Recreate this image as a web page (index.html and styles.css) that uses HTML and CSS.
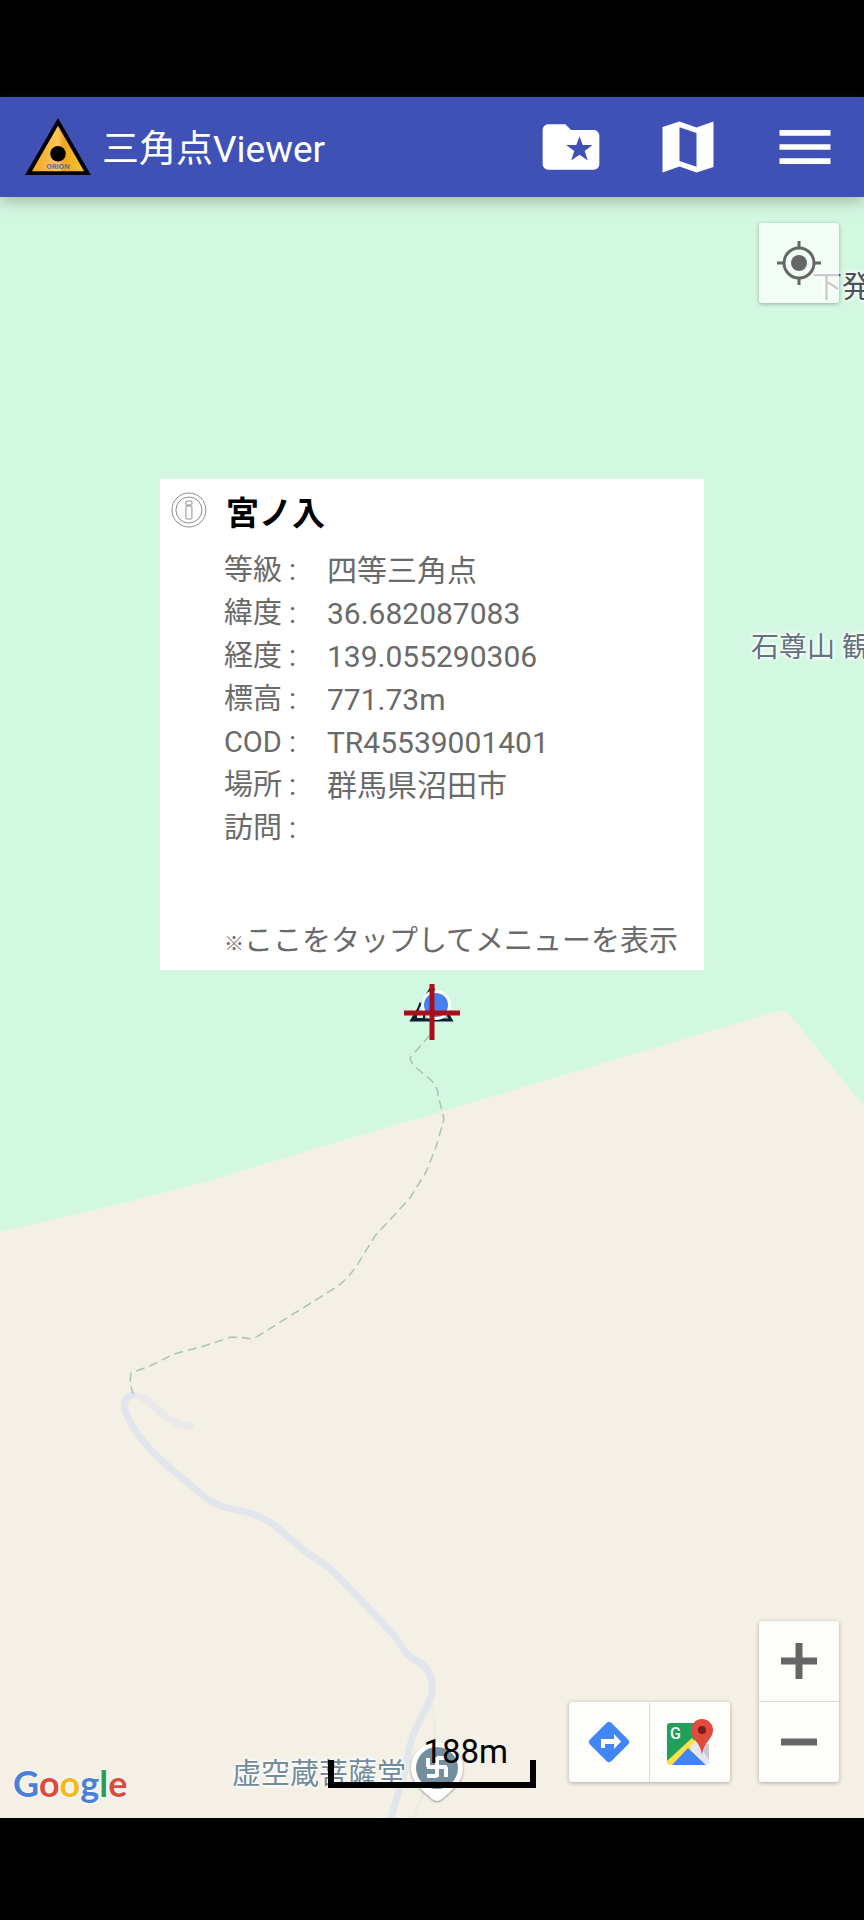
FILE: index.html
```html
<!DOCTYPE html>
<html lang="ja">

<head>
    <meta charset="UTF-8">
    <meta name="viewport" content="width=device-width, initial-scale=1.0">
    <title>三角点Viewer</title>

    <link rel="stylesheet" href="styles.css">
</head>

<body>
    <header class="header">
        <svg class="logo" viewBox="0 0 68 60">
            <defs>
                <linearGradient id="gold" x1="0" x2="1" y1="0" y2="0">
                    <stop offset="0" stop-color="#f5a81c" />
                    <stop offset="0.5" stop-color="#fbc65a" />
                    <stop offset="0.6" stop-color="#f3a51c" />
                    <stop offset="1" stop-color="#fcc62e" />
                </linearGradient>
            </defs>
            <path d="M34 0L68 59H0z" fill="#000" />
            <path d="M34 8L61 55H7z" fill="url(#gold)" />
            <circle cx="34" cy="37" r="8" fill="#000" />
            <text class="logo-text" x="34" y="53" text-anchor="middle">ORION</text>
        </svg>
        <h1 class="title">三角点Viewer</h1>
        <nav class="actions">
            <button class="action" aria-label="お気に入り">
                <svg viewBox="0 0 24 24"><path d="M20 6h-8l-2-2H4c-1.1 0-2 .9-2 2v12c0 1.1.9 2 2 2h16c1.1 0 2-.9 2-2V8c0-1.1-.9-2-2-2zm-2.06 10.8L15 14.7l-2.94 2.1 1.1-3.4-2.85-2.1h3.55L15 8.2l1.14 3.1h3.45l-2.75 2.1z" /></svg>
            </button>
            <button class="action" aria-label="地図">
                <svg viewBox="0 0 24 24"><path fill-rule="evenodd" d="M3 4.9L9 3l6 2.1L21 3v16.1L15 21l-6-2.1L3 21zM9 5v11.9l6 2.1V7.1z" /></svg>
            </button>
            <button class="action" aria-label="メニュー">
                <svg viewBox="0 0 24 24"><path d="M3 18h18v-2H3v2zm0-5h18v-2H3v2zm0-7v2h18V6H3z" /></svg>
            </button>
        </nav>
    </header>

    <main class="map">
        <!-- forest, roads and trail -->
        <svg class="terrain" viewBox="0 0 864 1621" preserveAspectRatio="xMidYMid slice">
            <path class="land" d="M0 1035L120 1007L209 984L320 950L444 914L775 815Q784 812 790 818L864 909V1621H0z" />
            <path class="road faint" d="M430 1508Q438 1525 434 1545L430 1580L413 1621" />
            <path class="road branch" d="M132 1198C147 1198 155 1212 165 1219S180 1228 190 1229" />
            <path class="road" d="M132 1198C119 1203 124 1215 135 1233C145 1248 158 1261 171 1272L206 1301C222 1313 240 1312 256 1318C275 1325 290 1343 306 1355C318 1363 328 1369 336 1377L394 1438C400 1446 403 1453 408 1458C415 1464 424 1465 429 1476C437 1492 430 1504 421 1521C411 1540 409 1551 406 1570L391 1621" />
            <path class="trail" d="M430 838L410 861L413 868L432 884Q438 891 438 898L444 922L436 950L426 975L410 1001L375 1039L362 1060Q352 1078 338 1089L298 1114L258 1139Q252 1143 246 1141L231 1140L204 1149L174 1157L150 1169L131 1176L130 1186L133 1197" />
        </svg>

        <span class="place village">下発</span>
        <span class="place mountain">石尊山 観</span>
        <span class="place temple">虚空蔵菩薩堂</span>
        <svg class="temple-pin" viewBox="0 0 56 64">
            <path d="M28 2a26 26 0 0 0-26 26c0 12 7 18 14 25l7 6q5 4 10 0l7-6c7-7 14-13 14-25A26 26 0 0 0 28 2z" fill="#fff" />
            <circle cx="28" cy="28" r="21" fill="#738f9e" />
            <path d="M28 17v20M18 27h20M19 18v9M28 18h10M37 27v10M18 36h10" stroke="#fff" stroke-width="4" fill="none" />
        </svg>

        <section class="info">
            <svg class="info-icon" viewBox="0 0 36 36">
                <circle cx="18" cy="18" r="17" />
                <circle cx="18" cy="18" r="13" />
                <rect x="15" y="9" width="6" height="4" rx="1" />
                <rect x="15" y="14" width="6" height="13" rx="1" />
            </svg>
            <h2 class="info-title">宮ノ入</h2>
            <dl class="info-list">
                <dt>等級 :</dt><dd>四等三角点</dd>
                <dt>緯度 :</dt><dd>36.682087083</dd>
                <dt>経度 :</dt><dd>139.055290306</dd>
                <dt>標高 :</dt><dd>771.73m</dd>
                <dt>COD :</dt><dd>TR45539001401</dd>
                <dt>場所 :</dt><dd>群馬県沼田市</dd>
                <dt>訪問 :</dt><dd></dd>
            </dl>
            <button class="info-note"><span class="mark">※</span>ここをタップしてメニューを表示</button>
        </section>

        <svg class="marker" viewBox="0 0 56 56">
            <path d="M28 3L47 36H8z" fill="#9fc3cc" stroke="#0c2029" stroke-width="3" />
            <path d="M12 31L16 20L20 25V35H12z" fill="#d8f0e6" stroke="#0c2029" stroke-width="2" />
            <circle cx="32" cy="21" r="15" fill="#fff" />
            <circle cx="32" cy="21" r="12" fill="#4680f0" />
            <path d="M0 29h56M28 0v56" stroke="#a90f17" stroke-width="5" />
        </svg>

        <button class="map-button locate" aria-label="現在地">
            <svg width="46" height="46" viewBox="0 0 46 46">
                <circle cx="23" cy="23" r="8" fill="#666" />
                <g fill="none" stroke="#666" stroke-width="3">
                    <circle cx="23" cy="23" r="15" />
                    <path d="M23 1v7M23 38v7M1 23h7M38 23h7" />
                </g>
            </svg>
        </button>

        <div class="controls">
            <div class="group">
                <button class="map-button" aria-label="ルート">
                    <svg width="42" height="42" viewBox="0 0 42 42">
                        <path d="M19 1.500q2-1.500 4 0L40.500 19q1.500 2 0 4L23 40.500q-2 1.500-4 0L1.500 23q-1.500-2 0-4z" fill="#4285f4" />
                        <path d="M13 27V18h13v-5l7 7.500-7 7.500v-5h-9v4z" fill="#fff" />
                    </svg>
                </button>
                <button class="map-button" aria-label="Google マップ">
                    <svg width="46" height="46" viewBox="0 0 46 46">
                        <path d="M3 4h39v39q0 3-3 3H3q-3 0-3-3V7q0-3 3-3z" fill="#f1f3f4" />
                        <path d="M3 4h26l1 16L0 43V7q0-3 3-3z" fill="#1fa15d" />
                        <path d="M25 19l6 6L7 46H3q-3 0-3-3v-1z" fill="#fde047" />
                        <path d="M21 29L39 46H5z" fill="#4285f4" />
                        <path d="M23 27l7-5 12 17v5l-3 2z" fill="#e3e6f3" />
                        <path d="M38 25h4v16l-6-9z" fill="#c9c9cd" />
                        <text class="maps-g" x="3" y="20">G</text>
                        <path d="M35 0a11 11 0 0 0-11 11c0 9 9 11 11 25 2-14 11-16 11-25A11 11 0 0 0 35 0z" fill="#e04a3f" />
                        <circle cx="35" cy="11" r="4" fill="#7c1f17" />
                    </svg>
                </button>
            </div>
            <div class="group vertical">
                <button class="map-button" aria-label="拡大">
                    <svg width="36" height="36" viewBox="0 0 36 36"><path d="M0 18h36M18 0v36" stroke="#666" stroke-width="7" /></svg>
                </button>
                <button class="map-button" aria-label="縮小">
                    <svg width="36" height="36" viewBox="0 0 36 36"><path d="M0 18h36" stroke="#666" stroke-width="7" /></svg>
                </button>
            </div>
        </div>

        <div class="scale"><span>188m</span></div>
        <div class="google"><span class="blue">G</span><span class="red">o</span><span class="yellow">o</span><span class="blue">g</span><span class="green">l</span><span class="red">e</span></div>
    </main>
</body>
</html>
```
FILE: styles.css
```css
* { box-sizing: border-box; }
body {
    margin: 0;
    min-height: 100vh;
    padding: 97px 0 102px;
    background-color: #000;
    font-family: Roboto, "Noto Sans CJK JP", sans-serif;
    display: flex;
    flex-direction: column;
}
button {  border: none;  padding: 0;  font: inherit;  cursor: pointer;}
svg {  display: block;}

.header {
    height: 100px;
    padding: 0 25px;
    background-color: #3f51b5;
    color: #fff;
    display: flex;
    align-items: center;
    position: relative;
    z-index: 1;
    box-shadow: 0 4px 14px rgba(70, 60, 50, 0.35);
}
.logo {  width: 66px;  height: 58px;}
.logo-text {  font-size: 8px;  font-weight: bold;  fill: #5a7388;}
.title {  margin: 0;  padding: 6px 0 0 11px;  font-size: 37px;  font-weight: 400;  line-height: 50px;}
.actions {  display: flex;  gap: 49px;  margin-left: auto;}
.action {  width: 68px;  height: 68px;  background: none;}
.action svg {  fill: #fff;}

.map {
    flex: 1;
    min-height: 1200px;
    position: relative;
    overflow: hidden;
    background-color: #d3f8e2;
}
.terrain {  position: absolute;  width: 100%;  height: 100%;}
.land {  fill: #f5f0e5;}
.road {  fill: none;  stroke: #e3e5ec;  stroke-width: 7;  stroke-linecap: round;}
.branch {  stroke: #e9e8ea;}
.faint {  stroke: #eeebe6;  stroke-width: 3;}
.trail {  fill: none;  stroke: #a9c4b0;  stroke-width: 1.500;  stroke-dasharray: 9 5;}

.place {
    position: absolute;
    font-size: 28px;
    line-height: 40px;
    white-space: nowrap;
    color: #5f7380;
    text-shadow: 0 0 2px #fff, 0 0 3px #fff, 0 0 4px #fff, 0 0 5px #fff;
}
.village {  left: 812px;  top: 70px;  font-size: 30px;  color: #4b5356;}
.mountain {  left: 751px;  top: 431px;}
.temple {  left: 232px;  top: 1557px;  font-size: 29px;  color: #738c9a;}
.temple-pin {
    position: absolute;
    left: 409px;
    top: 1543px;
    width: 56px;
    height: 64px;
    filter: drop-shadow(0 1px 1px rgba(0, 0, 0, 0.4));
}

.info {
    position: absolute;
    left: 50%;
    top: 282px;
    transform: translateX(-50%);
    padding: 13px 26px 4px 11px;
    background-color: #fff;
    color: #6a6a6a;
    font-size: 29px;
    line-height: 43px;
    display: grid;
    grid-template-columns: 36px auto;
    column-gap: 17px;
}
.info-icon {  width: 36px;  height: 36px;  fill: none;  stroke: #8c8c8c;}
.info-title {  margin: 0;  padding-left: 2px;  font-size: 33px;  line-height: 43px;  font-weight: 700;  color: #000;}
.info-list {
    grid-column: 2;
    margin: 14px 0 70px;
    display: grid;
    grid-template-columns: 103px auto;
    grid-auto-rows: 43px;
}
.info-list dd {  margin: 0;  font-size: 30px;}
.info-note {
    grid-column: 2;
    background: none;
    color: inherit;
    text-align: left;
    white-space: nowrap;
}
.mark {  font-size: 20px;}

.marker {
    position: absolute;
    left: 50%;
    top: 787px;
    width: 56px;
    height: 56px;
    transform: translateX(-50%);
}

.map-button {
    width: 80px;
    height: 80px;
    display: flex;
    justify-content: center;
    align-items: center;
    background-color: #fdfdfa;
}
.locate {
    position: absolute;
    top: 26px;
    right: 25px;
    border-radius: 3px;
    background-color: rgba(255, 255, 255, 0.7);
    box-shadow: 0 1px 4px rgba(0, 0, 0, 0.3);
}
.controls {
    position: absolute;
    right: 25px;
    bottom: 36px;
    display: flex;
    align-items: flex-end;
    gap: 29px;
}
.group {
    display: flex;
    gap: 1px;
    background-color: #dddcd8;
    border-radius: 3px;
    overflow: hidden;
    box-shadow: 0 1px 4px rgba(0, 0, 0, 0.3);
}
.vertical {  flex-direction: column;}
.maps-g {  font-size: 16px;  font-weight: 500;  fill: #fff;}

.scale {
    position: absolute;
    left: 50%;
    bottom: 30px;
    width: 208px;
    height: 28px;
    margin-left: -104px;
    border: 6px solid #000;
    border-top: none;
}
/* the distance stands above the bar */
.scale span {
    position: absolute;
    right: 22px;
    bottom: 10px;
    color: #000;
    font-size: 33px;
    line-height: 40px;
}

.google {
    position: absolute;
    left: 13px;
    bottom: 13px;
    font-family: Lato, sans-serif;
    font-size: 36px;
    font-weight: 700;
    line-height: 44px;
    text-shadow: 0 0 2px #fff, 0 0 3px #fff;
}
.blue {  color: #4b80d9;}
.red {  color: #dd4b3e;}
.yellow {  color: #efbb20;}
.green {  color: #2f9c55;}
```
